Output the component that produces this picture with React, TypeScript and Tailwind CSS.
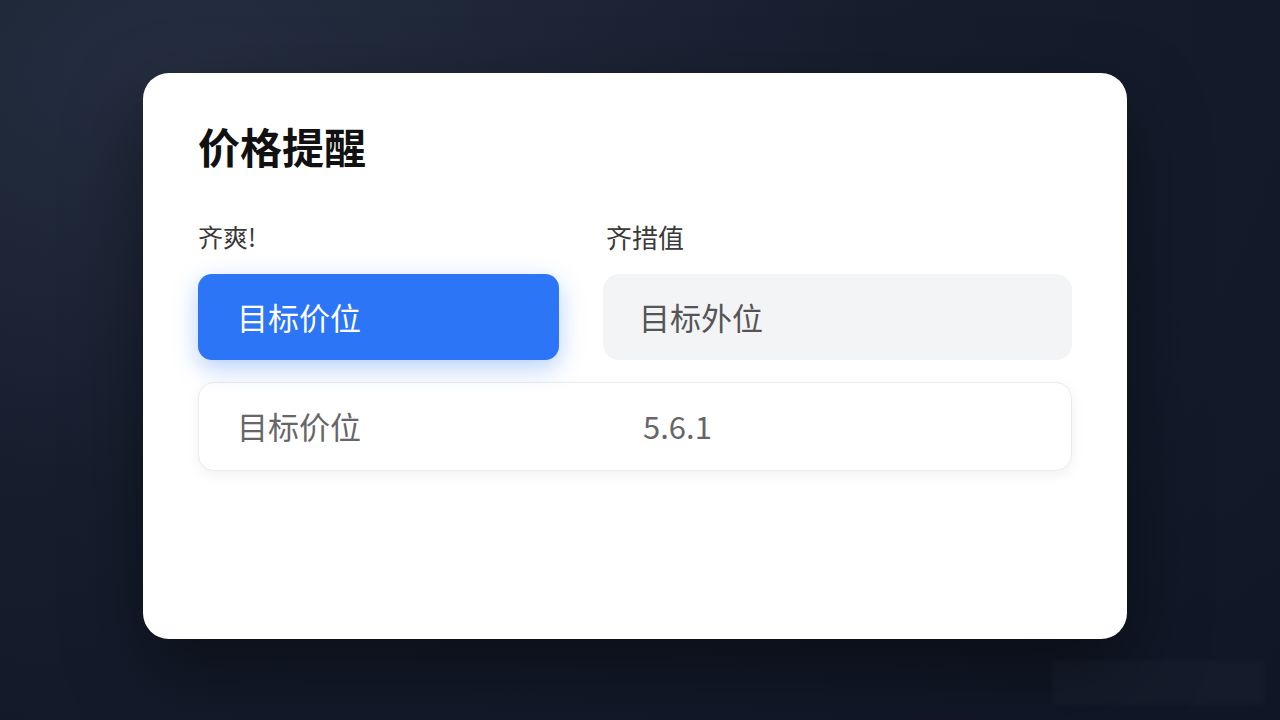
export default function App() {
  return (
    <div
      className="relative flex h-[720px] w-[1280px] items-start overflow-hidden bg-[radial-gradient(ellipse_at_15%_10%,#252e40_0%,#161e2e_45%,#0f1625_100%)] pl-[143px] pt-[73px]"
      style={{ fontFamily: '"Noto Sans CJK SC", "Noto Sans", sans-serif' }}
    >
      <div className="h-[566px] w-[984px] rounded-[26px] bg-white px-[55px] pt-[52px] shadow-[0_30px_80px_rgba(0,0,0,0.45)]">
        <h1 className="text-[42px] font-bold leading-none text-[#111]">价格提醒</h1>

        <div className="mt-[57px] grid grid-cols-[361px_1fr] gap-x-[44px]">
          <div className="text-[25px] leading-none text-[#3a3a3a]">齐爽!</div>
          <div className="pl-[3px] text-[26px] leading-none text-[#3a3a3a]">齐措值</div>
        </div>

        <div className="mt-[24px] grid grid-cols-[361px_1fr] gap-x-[44px]">
          <div className="flex h-[86px] items-center rounded-[14px] bg-[#2b75f6] px-[39px] text-[31px] text-white shadow-[0_8px_24px_rgba(43,117,246,0.35)]">
            目标价位
          </div>
          <div className="flex h-[86px] items-center rounded-[16px] bg-[#f3f4f6] px-[36px] text-[31px] text-[#555]">
            目标外位
          </div>
        </div>

        <div className="mt-[22px] grid h-[89px] grid-cols-[444px_1fr] items-center rounded-[16px] border border-[#ececee] bg-white shadow-[0_4px_14px_rgba(0,0,0,0.06)]">
          <div className="pl-[38px] text-[31px] text-[#666]">目标价位</div>
          <div className="text-[31px] text-[#666]">5.6.1</div>
        </div>
      </div>

      <div className="absolute left-[1052px] top-[660px] h-[45px] w-[213px] rounded-[4px] bg-white/[0.02] blur-[2px]" />
    </div>
  );
}
